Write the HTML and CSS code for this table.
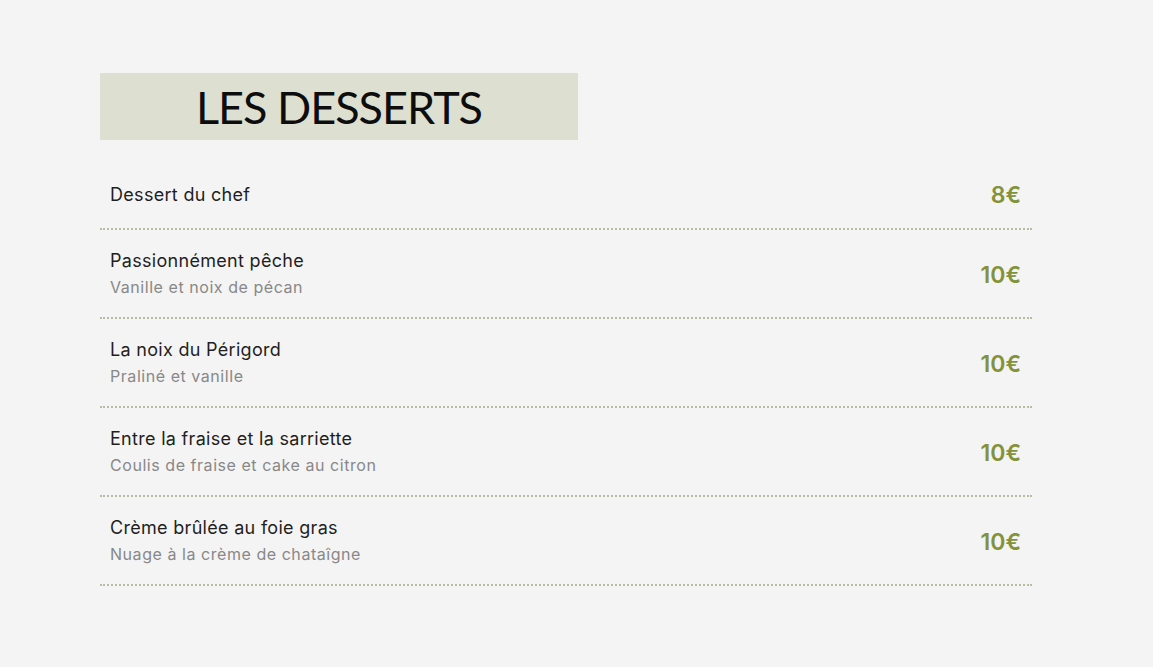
FILE: index.html
```html
<!DOCTYPE html>
<html lang="fr">
<head>
<meta charset="utf-8">
<title>Les desserts</title>
<link rel="stylesheet" href="styles.css">
</head>
<body>
<main class="menu">
  <h1 class="menu-title">LES DESSERTS</h1>
  <ul class="items">
    <li class="item item-first">
      <div class="item-text">
        <div class="item-name">Dessert du chef</div>
      </div>
      <div class="item-price">8€</div>
    </li>
    <li class="item">
      <div class="item-text">
        <div class="item-name">Passionnément pêche</div>
        <div class="item-desc">Vanille et noix de pécan</div>
      </div>
      <div class="item-price">10€</div>
    </li>
    <li class="item">
      <div class="item-text">
        <div class="item-name">La noix du Périgord</div>
        <div class="item-desc">Praliné et vanille</div>
      </div>
      <div class="item-price">10€</div>
    </li>
    <li class="item">
      <div class="item-text">
        <div class="item-name">Entre la fraise et la sarriette</div>
        <div class="item-desc">Coulis de fraise et cake au citron</div>
      </div>
      <div class="item-price">10€</div>
    </li>
    <li class="item">
      <div class="item-text">
        <div class="item-name">Crème brûlée au foie gras</div>
        <div class="item-desc">Nuage à la crème de chataîgne</div>
      </div>
      <div class="item-price">10€</div>
    </li>
  </ul>
</main>
</body>
</html>
```

FILE: styles.css
```css
html, body {
  margin: 0;
  padding: 0;
  background: #f4f4f4;
}

body {
  font-family: "Inter", "Noto Sans", sans-serif;
  color: #1f1f1f;
}

.menu {
  width: 932px;
  padding: 73px 0 0 100px;
}

.menu-title {
  margin: 0;
  width: 478px;
  height: 67px;
  background: #dddfd0;
  display: flex;
  align-items: center;
  justify-content: center;
  font-family: "Lato", "Noto Sans", sans-serif;
  font-weight: 400;
  font-size: 45px;
  letter-spacing: -1px;
  color: #0d0d0d;
}

.items {
  list-style: none;
  margin: 22px 0 0 0;
  padding: 0;
}

.item {
  display: flex;
  align-items: center;
  justify-content: space-between;
  padding: 18px 11px 16px 10px;
  border-bottom: 2px dotted #b9bba3;
}

.item-first {
  padding-top: 19px;
  padding-bottom: 19px;
}

.item-name {
  font-size: 18px;
  line-height: 26px;
  letter-spacing: 0.3px;
  color: #1f1f1f;
}

.item-desc {
  font-size: 16px;
  line-height: 27px;
  letter-spacing: 0.55px;
  color: #888888;
}

.item-price {
  font-size: 23px;
  font-weight: 600;
  color: #84923a;
}
```
